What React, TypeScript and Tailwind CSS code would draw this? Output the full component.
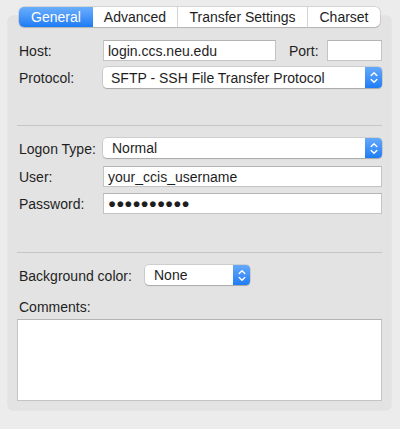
import React from "react";

const font = { fontFamily: '"Liberation Sans", Arial, sans-serif' };

const Stepper = () => (
  <div className="flex w-[17px] items-center justify-center self-stretch rounded-r-[4px] bg-gradient-to-b from-[#64a9fb] to-[#1c7cf4]">
    <svg width="8" height="13" viewBox="0 0 8 13" fill="none" stroke="white" strokeWidth="1.4" strokeLinecap="round" strokeLinejoin="round">
      <path d="M1.2 4.6 L4 1.8 L6.8 4.6" />
      <path d="M1.2 8.4 L4 11.2 L6.8 8.4" />
    </svg>
  </div>
);

const Select: React.FC<{ value: string; className?: string; pad?: string }> = ({ value, className = "", pad = "pl-[8px]" }) => (
  <div className={`flex items-stretch rounded-[4px] bg-white shadow-[0_0_0_0.5px_rgba(0,0,0,0.18),0_1px_1px_rgba(0,0,0,0.18)] ${className}`}>
    <div className={`flex flex-1 items-center pt-[1px] text-[14px] text-[#1e1e1e] ${pad}`}>{value}</div>
    <Stepper />
  </div>
);

const Input: React.FC<{ children?: React.ReactNode; className?: string }> = ({ children, className = "" }) => (
  <div className={`flex items-center border border-[#c4c4c4] border-t-[#b4b4b4] bg-white pl-[4px] pt-[1px] text-[14px] text-[#1e1e1e] ${className}`}>
    {children}
  </div>
);

const Label: React.FC<{ children: React.ReactNode; className?: string }> = ({ children, className = "w-[86px]" }) => (
  <div className={`shrink-0 pl-[2px] pt-[2px] text-[14px] text-[#1f1f1f] ${className}`}>{children}</div>
);

const tabs = [
  { name: "General", w: "w-[74px]" },
  { name: "Advanced", w: "w-[84px]" },
  { name: "Transfer Settings", w: "w-[130px]" },
  { name: "Charset", w: "w-[73px]" },
];

export default function App() {
  return (
    <div className="h-[429px] w-[400px] overflow-hidden bg-[#ececec] pt-[7px]" style={font}>
      <div className="relative z-10 -mb-[11px] flex justify-center pr-[1px]">
        <div className="flex h-[20px] overflow-hidden rounded-[5px] bg-white shadow-[0_0_0_0.5px_rgba(0,0,0,0.2),0_1px_1px_rgba(0,0,0,0.12)]">
          {tabs.map((t, i) => (
            <div
              key={t.name}
              className={`flex items-center justify-center text-[14px] ${t.w} ${
                i === 0
                  ? "bg-gradient-to-b from-[#6aaefc] to-[#1b7bf4] text-white"
                  : "border-l border-[#d4d4d4] text-[#1e1e1e]"
              } ${i === 1 ? "border-l-0" : ""}`}
            >
              {t.name}
            </div>
          ))}
        </div>
      </div>

      <div className="mx-[8px] flex h-[394px] w-[383px] flex-col rounded-[5px] bg-[#e3e3e3] px-[9px] pt-[24px] shadow-[0_0_0_0.5px_rgba(0,0,0,0.06)]">
        <div className="flex h-[21px] items-center">
          <Label>Host:</Label>
          <Input className="h-[21px] w-[173px]">login.ccs.neu.edu</Input>
          <div className="ml-[13px] w-[38px] pt-[2px] text-[14px] text-[#1f1f1f]">Port:</div>
          <Input className="h-[21px] w-[55px]" />
        </div>
        <div className="mt-[6px] flex h-[21px] items-center">
          <Label>Protocol:</Label>
          <Select value="SFTP - SSH File Transfer Protocol" className="h-[21px] flex-1" />
        </div>

        <div className="mt-[37px] h-px bg-[#c6c6c6]" />

        <div className="mt-[12px] flex h-[20px] items-center">
          <Label>Logon Type:</Label>
          <Select value="Normal" className="h-[20px] flex-1" pad="pl-[9px]" />
        </div>
        <div className="mt-[8px] flex h-[21px] items-center">
          <Label>User:</Label>
          <Input className="h-[21px] flex-1">your_ccis_username</Input>
        </div>
        <div className="mt-[6px] flex h-[21px] items-center">
          <Label>Password:</Label>
          <Input className="h-[21px] flex-1">
            <span className="text-[13.5px] leading-none">●●●●●●●●●●</span>
          </Input>
        </div>

        <div className="mt-[38px] h-px bg-[#c6c6c6]" />

        <div className="mt-[12px] flex h-[20px] items-center">
          <Label className="w-[128px]">Background color:</Label>
          <Select value="None" className="h-[20px] w-[105px]" pad="pl-[9px]" />
        </div>
        <div className="mt-[13px] h-[17px] pl-[2px] pt-[1px] text-[14px] leading-[17px] text-[#1f1f1f]">Comments:</div>
        <div className="mt-[4px] h-[82px] w-full border border-[#c4c4c4] border-t-[#b4b4b4] bg-white" />
      </div>
    </div>
  );
}
